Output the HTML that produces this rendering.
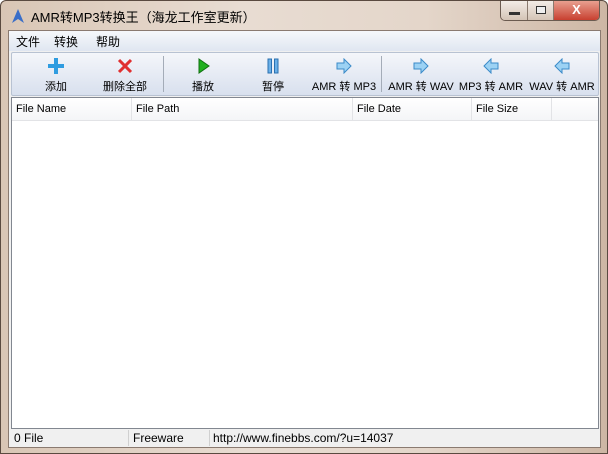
<!DOCTYPE html>
<html><head><meta charset="utf-8"><style>
*{margin:0;padding:0;box-sizing:border-box}
body{width:608px;height:454px;overflow:hidden;font-family:"Liberation Sans","Noto Sans CJK SC",sans-serif;font-size:12px;color:#000;background:#fff}
.win{position:absolute;left:0;top:0;width:608px;height:454px;border-radius:6px 6px 0 0;background:linear-gradient(90deg,#d9c6b5 0%,#e8dcd2 40%,#e4d6ca 70%,#cdb6a4 100%);border:1px solid #5a4a40}
.title{position:absolute;left:30px;top:6px;font-size:13px;color:#000}
.btns{position:absolute;right:7px;top:0;height:20px;display:flex;border:1px solid #6b5b50;border-top:none;border-radius:0 0 5px 5px;overflow:hidden}
.btns div{height:19px;background:linear-gradient(#f3ece6,#d4c4b6);border-right:1px solid #8a7a6e}
.client{position:absolute;left:7px;top:29px;width:593px;height:418px;background:#f0f0f0;border:1px solid #8a7a70}
.menu{position:absolute;left:0;top:0;width:591px;height:20px;background:linear-gradient(#f6f8fb,#dfe6f1);}
.menu span{position:absolute;top:2px;font-size:12px}
.tb{position:absolute;left:2px;top:21px;width:588px;height:44px;background:linear-gradient(#f4f6fa,#d8e0ee);border:1px solid #b8c2d2;border-radius:2px}
.b{position:absolute;top:0;width:70px;height:42px;text-align:center}
.b .t{position:absolute;top:25px;left:-10px;right:-10px;font-size:11px;white-space:nowrap}
.b svg{position:absolute;left:27px;top:5px}
.sep{position:absolute;top:3px;width:1px;height:36px;background:#a4acb8}
.list{position:absolute;left:2px;top:66px;width:588px;height:332px;background:#fff;border:1px solid #828790}
.hdr{position:absolute;left:0;top:0;width:586px;height:23px;background:linear-gradient(#fff,#f4f5f7);border-bottom:1px solid #e2e3e6}
.hdr span{position:absolute;top:5px;font-size:11px}
.hdr i{position:absolute;top:0;width:1px;height:23px;background:#e2e3e6}
.status{position:absolute;left:0;top:398px;width:591px;height:18px;background:#f0f0f0;font-size:12px}
.status span{position:absolute;top:2px}
.status i{position:absolute;top:1px;width:1px;height:16px;background:#d0d0d0}
</style></head><body>
<div class="win">
<svg style="position:absolute;left:10px;top:7px" width="14" height="16"><path d="M7 1 L1 15 L7 11 L13 15 Z" fill="#3a6ec8"/></svg>
<div class="title">AMR转MP3转换王（海龙工作室更新）</div>
<div class="btns"><div style="width:27px"><div style="margin:11px 8px 0;width:11px;height:3px;background:#333;border:none"></div></div><div style="width:26px"><div style="margin:5px 8px 0;width:10px;height:8px;border:1px solid #333;background:#eee"></div></div><div style="width:45px;background:linear-gradient(#e8a090,#c84030);border:none;color:#fff;text-align:center;font-weight:bold;font-size:13px;line-height:18px">X</div></div>
<div class="client">
<div class="menu"><span style="left:7px">文件</span><span style="left:45px">转换</span><span style="left:87px">帮助</span></div>
<div class="tb">
<div class="b" style="left:9px"><svg width="16" height="16"><path d="M6 0h4v6h6v4h-6v6h-4v-6h-6v-4h6z" fill="#2f9ce0"/></svg><div class="t">添加</div></div>
<div class="b" style="left:78px"><svg width="16" height="16"><path d="M2 2 L14 14 M14 2 L2 14" stroke="#e03030" stroke-width="3"/></svg><div class="t">删除全部</div></div>
<div class="sep" style="left:151px"></div>
<div class="b" style="left:156px"><svg width="16" height="16"><path d="M4 1 L14 8 L4 15 Z" fill="#20b020" stroke="#107010"/></svg><div class="t">播放</div></div>
<div class="b" style="left:226px"><svg width="16" height="16"><rect x="3" y="1" width="3.5" height="14" fill="#6ab0e8" stroke="#2a70b0"/><rect x="9.5" y="1" width="3.5" height="14" fill="#6ab0e8" stroke="#2a70b0"/></svg><div class="t">暂停</div></div>
<div class="b" style="left:297px"><svg width="16" height="16"><path d="M1 5h7v-4l7 7-7 7v-4h-7z" fill="#9cd2f4" stroke="#3a8ac8"/></svg><div class="t">AMR 转 MP3</div></div>
<div class="sep" style="left:369px"></div>
<div class="b" style="left:374px"><svg width="16" height="16"><path d="M1 5h7v-4l7 7-7 7v-4h-7z" fill="#9cd2f4" stroke="#3a8ac8"/></svg><div class="t">AMR 转 WAV</div></div>
<div class="b" style="left:444px"><svg width="16" height="16"><path d="M15 5h-7v-4l-7 7 7 7v-4h7z" fill="#9cd2f4" stroke="#3a8ac8"/></svg><div class="t">MP3 转 AMR</div></div>
<div class="b" style="left:515px"><svg width="16" height="16"><path d="M15 5h-7v-4l-7 7 7 7v-4h7z" fill="#9cd2f4" stroke="#3a8ac8"/></svg><div class="t">WAV 转 AMR</div></div>
</div>
<div class="list"><div class="hdr"><span style="left:4px">File Name</span><i style="left:119px"></i><span style="left:124px">File Path</span><i style="left:340px"></i><span style="left:345px">File Date</span><i style="left:459px"></i><span style="left:464px">File Size</span><i style="left:539px"></i></div></div>
<div class="status"><span style="left:5px">0 File</span><i style="left:119px"></i><span style="left:124px">Freeware</span><i style="left:200px"></i><span style="left:204px">http://www.finebbs.com/?u=14037</span></div>
</div>
</div>
</body></html>
